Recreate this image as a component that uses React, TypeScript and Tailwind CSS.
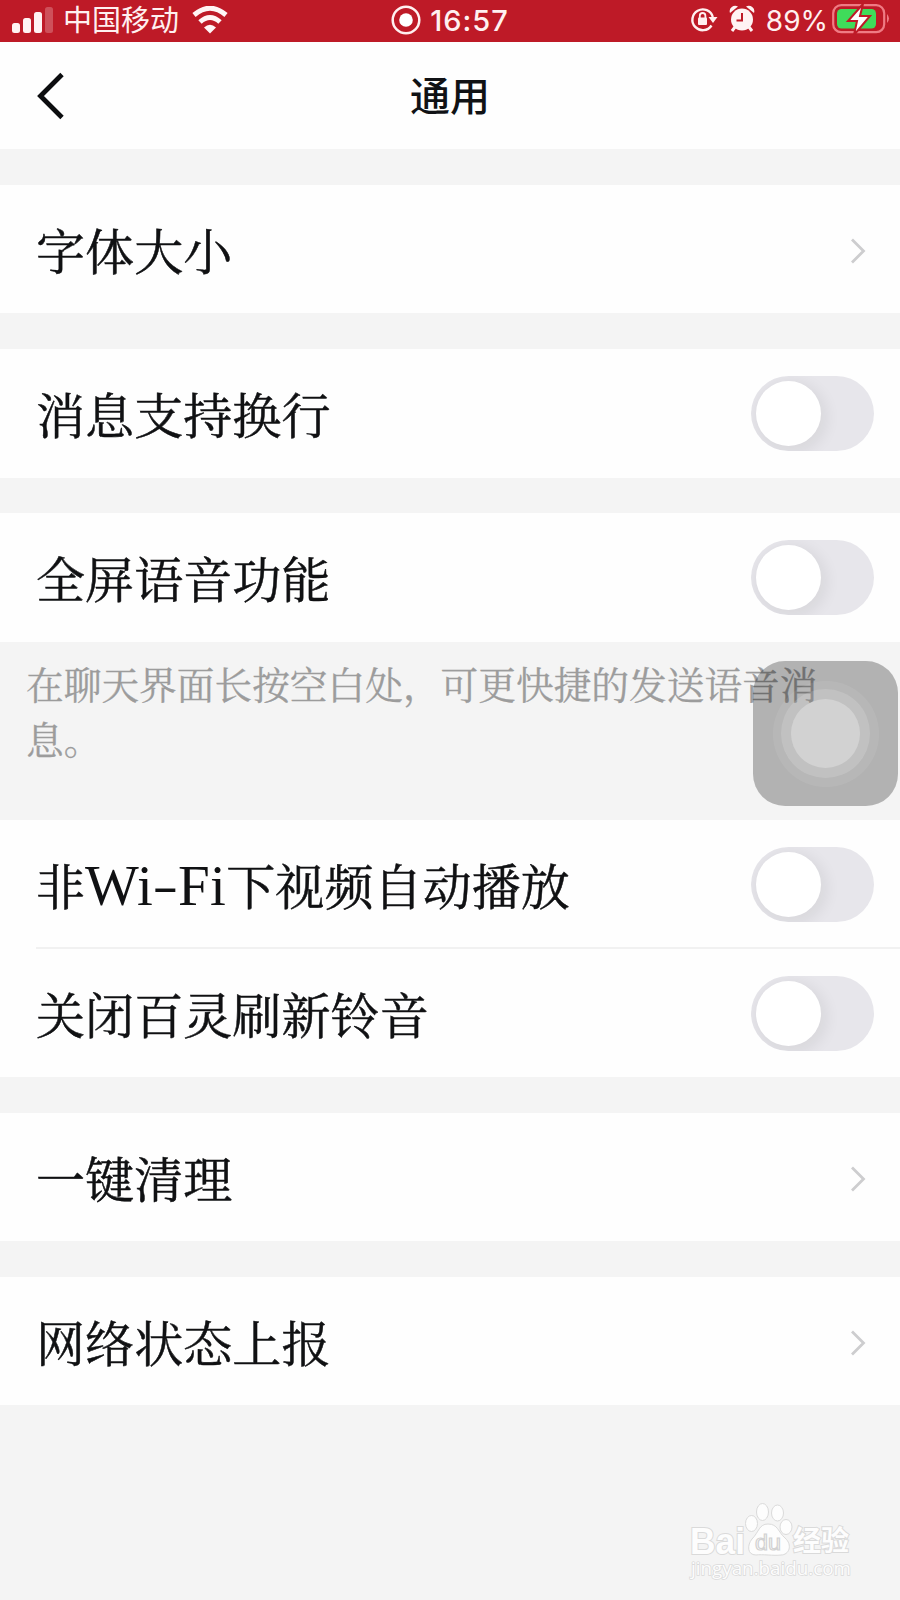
import React from "react";

function Chevron() {
  return (
    <svg className="mr-[33px] mt-1" width="18" height="28" viewBox="0 0 18 28" fill="none">
      <path d="M3 2.5 L14.500 14 L3 25.5" stroke="#cdcdcf" strokeWidth="2.8" />
    </svg>
  );
}

function Toggle() {
  return (
    <div
      role="switch"
      aria-checked="false"
      className="mr-[26px] h-[75px] w-[123px] overflow-hidden rounded-full bg-[#e7e6eb] p-[5px]"
    >
      <div className="size-[65px] rounded-full bg-white shadow-[3px_4px_14px_4px_rgba(0,0,0,0.06)]" />
    </div>
  );
}

function Row({ children, control, className = "h-32" }: { children: React.ReactNode; control: React.ReactNode; className?: string }) {
  return (
    <div className={`flex items-center justify-between bg-[#fefefe] pl-9 ${className}`}>
      <span className="whitespace-nowrap pt-[9px] text-[49.1px] leading-[64px] text-[#101113] [-webkit-text-stroke:0.5px_#101113]">{children}</span>
      {control}
    </div>
  );
}

function StatusBar() {
  return (
    <header className="grid h-[42px] grid-cols-3 items-center bg-[#be1a27] font-['Inter','Noto_Sans_CJK_SC',sans-serif] text-[#fff0f0]">
      <div className="flex items-center pb-[5px]">
        <svg className="ml-3 shrink-0" width="42" height="28" viewBox="0 0 42 28" fill="#fff3f3">
          <rect x="0" y="17" width="8" height="10" rx="2.5" />
          <rect x="11" y="12" width="8" height="15" rx="2.5" />
          <rect x="22" y="6" width="8" height="21" rx="2.5" />
          <rect x="33" y="1" width="8" height="26" rx="2.5" opacity=".25" />
        </svg>
        <span className="ml-[9px] whitespace-nowrap pt-0.5 text-[29px] font-normal leading-[38px]">中国移动</span>
        <svg className="ml-[13px] shrink-0" width="36" height="28" viewBox="0 0 36 28" fill="none" stroke="#fff5f5" strokeWidth="5">
          <path d="M2 9 Q18 -4.5 34 9" />
          <path d="M8 16 Q18 7 28 16" />
          <path d="M12 21.500 Q18 16 24 21.500 L18 27.500 Z" fill="#fff5f5" stroke="none" />
        </svg>
      </div>
      <div className="flex items-center justify-center pb-[6px]">
        <svg width="30" height="30" viewBox="0 0 30 30">
          <circle cx="15" cy="15" r="13.3" fill="none" stroke="#fff0f0" strokeWidth="2.5" />
          <circle cx="15" cy="15" r="6.8" fill="#fff" />
        </svg>
        <span className="ml-[9px] pt-0.5 text-[29px] font-medium leading-8 tracking-[1px]">16:57</span>
      </div>
      <div className="flex items-center justify-end pb-[7px]">
        <svg width="28" height="28" viewBox="0 0 28 28" fill="none" stroke="#fff0f0" strokeWidth="2.4">
          <path d="M21.5 20.5 A10.4 10.4 0 1 1 22.8 12" />
          <path d="M18.5 12 H27.5 L23 18 Z" fill="#fff0f0" stroke="none" />
          <rect x="8" y="12.5" width="9" height="7.5" rx="1" fill="#fff0f0" stroke="none" />
          <path d="M9.8 13 V10.8 a2.8 2.8 0 0 1 5.6 0 V13" strokeWidth="1.8" />
        </svg>
        <svg className="ml-[11px]" width="26" height="28" viewBox="0 0 26 28">
          <path d="M6 22 L3 26 M20 22 L23 26" stroke="#fff3f3" strokeWidth="3" />
          <path d="M1 8 A5.5 5.5 0 0 1 9 1.5 Z M25 8 A5.5 5.5 0 0 0 17 1.5 Z" fill="#fff3f3" />
          <circle cx="13" cy="14.5" r="11" fill="#fff3f3" />
          <path d="M13 8 V15.5 H7.5" fill="none" stroke="#be1a27" strokeWidth="2" />
        </svg>
        <span className="ml-[11px] pt-[3px] text-[28px] leading-8">89%</span>
        <svg className="ml-1 mr-2.5" width="58" height="32" viewBox="0 0 58 32">
          <rect x="1.2" y="2.2" width="51" height="27" rx="8" fill="none" stroke="#ef7b84" strokeWidth="2.2" />
          <rect x="5" y="6" width="39" height="19.5" rx="4.5" fill="#3fdc5a" />
          <path d="M55 11 Q59 15.500 55 20 Z" fill="#ef7b84" />
          <path d="M31 1 L16 18 H25 L22 32 L38 13 H28 Z" fill="#fff" stroke="#be1a27" strokeWidth="2" />
        </svg>
      </div>
    </header>
  );
}

function AssistiveTouch() {
  return (
    <div className="absolute left-[753px] top-[661px] flex size-[145px] items-center justify-center rounded-[32px] bg-black/27">
      <div className="flex size-[106px] items-center justify-center rounded-full bg-white/7">
        <div className="flex size-[89px] items-center justify-center rounded-full bg-white/15">
          <div className="size-[69px] rounded-full bg-[#d2d2d2]" />
        </div>
      </div>
    </div>
  );
}

function Watermark() {
  return (
    <svg className="absolute left-[680px] top-[1495px]" width="180" height="90" viewBox="0 0 180 90" fill="#fdfdfd" stroke="#dadada" strokeWidth="1">
      <g fontFamily="'Liberation Sans', 'Noto Sans CJK SC', sans-serif" fontWeight="700" paintOrder="stroke" strokeWidth="2">
        <text x="10" y="58.500" fontSize="36" textLength="55" lengthAdjust="spacingAndGlyphs">Bai</text>
        <text x="113" y="56" fontSize="28" textLength="56" lengthAdjust="spacingAndGlyphs">经验</text>
      </g>
      <ellipse cx="71.500" cy="28.500" rx="6" ry="8" />
      <ellipse cx="82.500" cy="17" rx="6" ry="8.500" />
      <ellipse cx="97.500" cy="18" rx="6" ry="8" />
      <ellipse cx="106" cy="32" rx="6" ry="7.500" />
      <path d="M88 29 C98 29 98 37 105 43 C113 50 109 60 101 60 C94 61 82 59 76 60 C67 60 67 50 72 44 C79 37 79 29 88 29 Z" />
      <text x="75" y="55" fontFamily="'Liberation Sans', sans-serif" fontSize="22" textLength="26" lengthAdjust="spacingAndGlyphs" fill="#fff" stroke="#d2d2d2" strokeWidth="1.2">du</text>
      <text x="11" y="80" fontFamily="'Open Sans', sans-serif" fontSize="18" textLength="160" lengthAdjust="spacingAndGlyphs" paintOrder="stroke" strokeWidth="1.5">jingyan.baidu.com</text>
    </svg>
  );
}

export default function App() {
  return (
    <div className="relative h-[1600px] w-[900px] overflow-hidden bg-[#f4f4f4] font-['Liberation_Serif','Noto_Serif_CJK_SC','Noto_Sans_CJK_SC',serif]">
      <StatusBar />
      <nav className="grid h-[107px] grid-cols-3 items-center bg-[#fefefe]">
        <svg className="ml-9" width="30" height="48" viewBox="0 0 30 48" fill="none">
          <path d="M26 2.500 L4.500 24 L26 45.500" stroke="#0c0d0f" strokeWidth="4.800" />
        </svg>
        <h1 className="pb-1 text-center font-['Noto_Sans_CJK_SC',sans-serif] text-[40px] font-medium leading-[56px] text-[#101215]">通用</h1>
      </nav>
      <main className="pt-9">
        <Row control={<Chevron />}>字体大小</Row>
        <div className="mt-9">
          <Row className="h-[129px]" control={<Toggle />}>消息支持换行</Row>
        </div>
        <div className="mt-[35px]">
          <Row className="h-[129px]" control={<Toggle />}>全屏语音功能</Row>
        </div>
        <p className="h-[178px] whitespace-nowrap pl-[26px] pt-[17px] text-[37.7px] leading-[55px] text-[#9c9c9c] [-webkit-text-stroke:0.3px_#9c9c9c]">
          在聊天界面长按空白处，可更快捷的发送语音消
          <br />
          息。
        </p>
        <div className="bg-[#fefefe]">
          <Row className="h-[128px]" control={<Toggle />}>
            非
            <span className="text-[57px] leading-none tracking-[0.3px] [-webkit-text-stroke:0px]">
              Wi<span className="inline-block w-[25px] origin-center scale-x-[1.35] scale-y-[0.8] text-center">-</span>Fi
            </span>
            下视频自动播放
          </Row>
          <div className="ml-9 mt-[-1px] h-0.5 bg-[#f1f1f1]" />
          <Row control={<Toggle />}>关闭百灵刷新铃音</Row>
        </div>
        <div className="mt-9">
          <Row control={<Chevron />}>一键清理</Row>
        </div>
        <div className="mt-9">
          <Row control={<Chevron />}>网络状态上报</Row>
        </div>
      </main>
      <AssistiveTouch />
      <Watermark />
    </div>
  );
}
